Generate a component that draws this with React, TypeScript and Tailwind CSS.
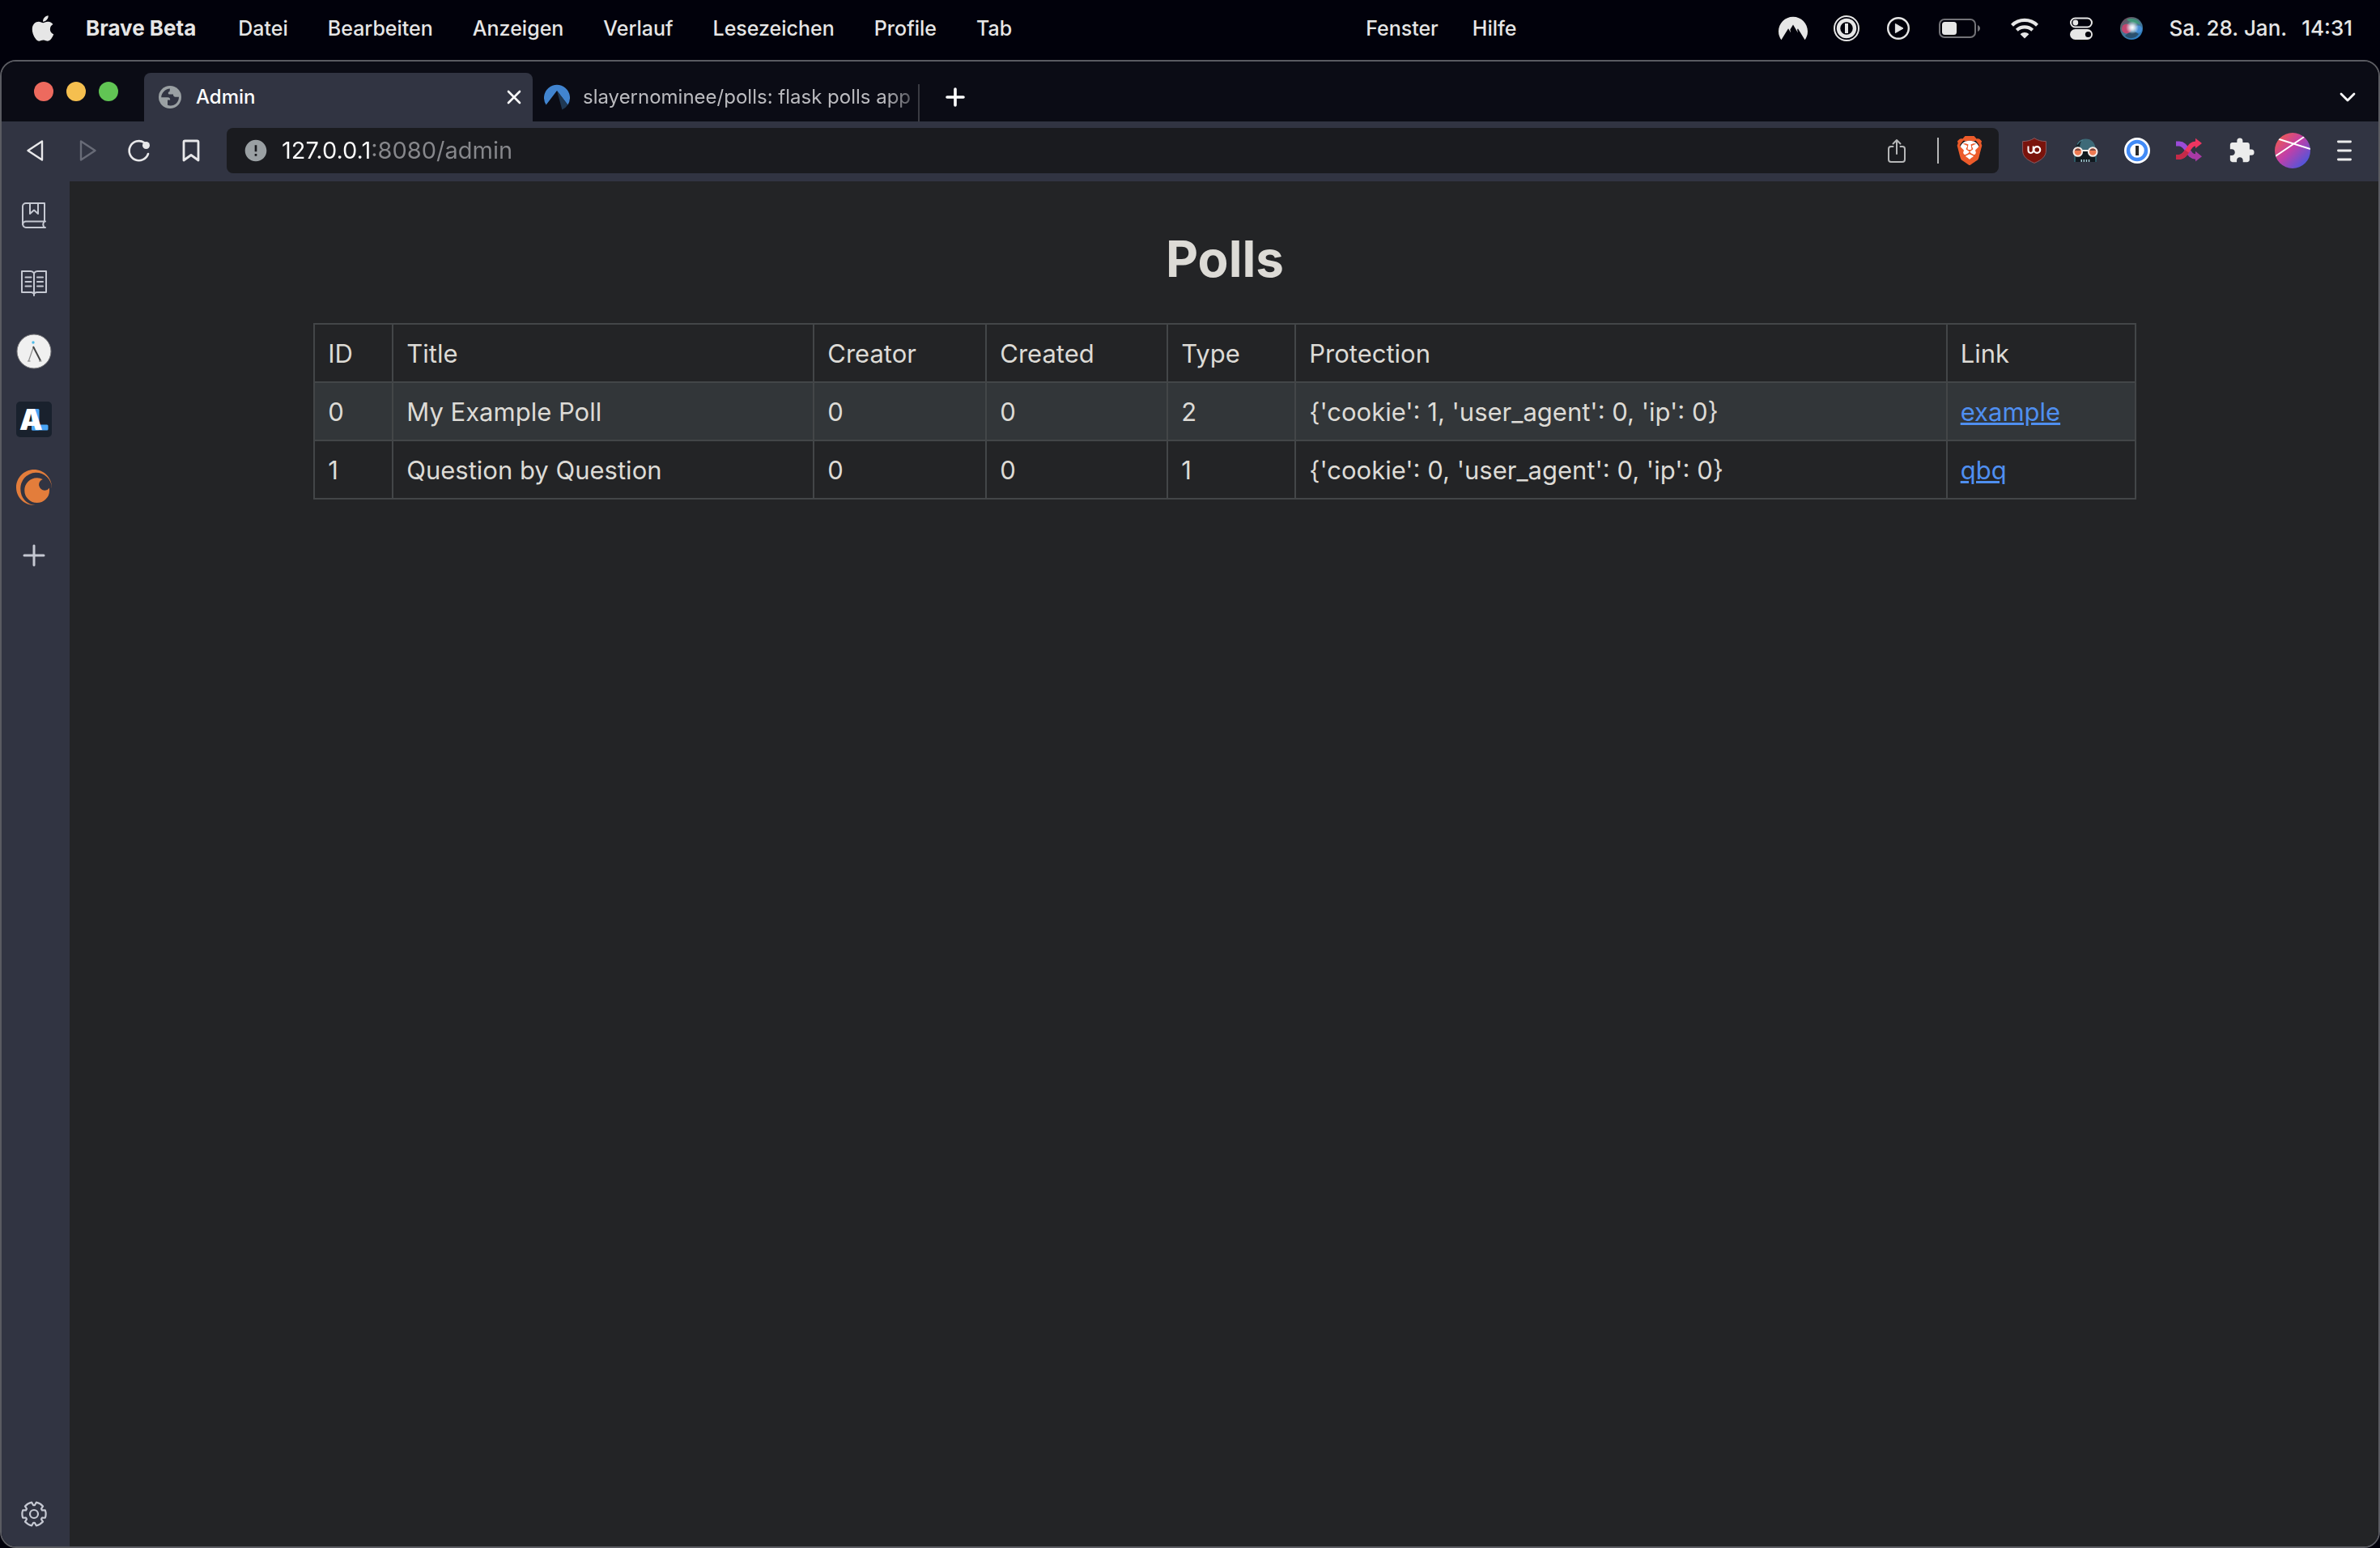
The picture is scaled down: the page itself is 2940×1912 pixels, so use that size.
import React from "react";
import { FaApple } from "react-icons/fa";
import { MdError, MdExtension } from "react-icons/md";
import { SiBrave, SiCrunchyroll, SiNordvpn } from "react-icons/si";

const menus = ["Datei", "Bearbeiten", "Anzeigen", "Verlauf", "Lesezeichen", "Profile", "Tab"];

const polls = [
  { id: 0, title: "My Example Poll", creator: 0, created: 0, type: 2, protection: "{'cookie': 1, 'user_agent': 0, 'ip': 0}", link: "example" },
  { id: 1, title: "Question by Question", creator: 0, created: 0, type: 1, protection: "{'cookie': 0, 'user_agent': 0, 'ip': 0}", link: "qbq" },
];

const polar = (r: number, deg: number) => {
  const a = (deg * Math.PI) / 180;
  return `${(16 + r * Math.cos(a)).toFixed(2)} ${(16 + r * Math.sin(a)).toFixed(2)}`;
};
const gearPath =
  [0, 60, 120, 180, 240, 300]
    .map((t, i) => `${i ? "L" : "M"}${polar(11, t - 25)}L${polar(14.6, t - 19)}A14.6 14.6 0 0 1 ${polar(14.6, t + 19)}L${polar(11, t + 25)}`)
    .join("") + "Z";

function PasswordIcon() {
  return (
    <svg className="size-8" viewBox="0 0 32 32" fill="none" stroke="#e6e6e6">
      <circle cx="16" cy="16" r="15" strokeWidth="2" />
      <circle cx="16" cy="16" r="10" strokeWidth="4.500" />
      <path d="M16 10v12" strokeWidth="4" />
    </svg>
  );
}

function PlayIcon() {
  return (
    <svg className="size-7" viewBox="0 0 28 28">
      <circle cx="14" cy="14" r="12.800" fill="none" stroke="#e6e6e6" strokeWidth="2.400" />
      <path d="M10.400 8.400v11.200l9.600-5.600z" fill="#e6e6e6" stroke="#e6e6e6" strokeLinejoin="round" />
    </svg>
  );
}

function BatteryIcon() {
  return (
    <svg className="h-6 w-[51px]" viewBox="0 0 51 24">
      <rect x="1" y="1" width="44" height="22" rx="6" fill="none" stroke="#737378" strokeWidth="2" />
      <path d="M48 8c4 1.500 4 6.500 0 8z" fill="#737378" />
      <rect x="4" y="4" width="18" height="16" rx="3.500" fill="#e6e6e6" />
    </svg>
  );
}

function WifiIcon() {
  return (
    <svg className="h-[26px] w-[34px]" viewBox="0 0 34 26" fill="none" stroke="#e6e6e6" strokeWidth="4.200">
      <path d="M1.500 9.200C10 .800 24 .800 32.500 9.200" />
      <path d="M7.300 15.200c5.500-5.200 13.900-5.200 19.400 0" />
      <path d="M17 25.500l-5.400-5.300c3-2.800 7.800-2.800 10.800 0z" fill="#e6e6e6" stroke="none" />
    </svg>
  );
}

function ControlCenterIcon() {
  return (
    <svg className="h-7 w-7" viewBox="0 0 28 28">
      <rect x="1" y="1.500" width="26" height="11" rx="5.500" fill="none" stroke="#e6e6e6" strokeWidth="2" />
      <circle cx="6.800" cy="7" r="3.400" fill="#e6e6e6" />
      <rect x="0" y="15" width="28" height="13" rx="6.500" fill="#e6e6e6" />
      <circle cx="22.500" cy="21.500" r="3.600" fill="#01010b" />
    </svg>
  );
}

function SiriIcon() {
  return (
    <svg className="size-7" viewBox="0 0 28 28">
      <defs>
        <linearGradient id="siri-base" x1="0" y1="0" x2="0.600" y2="1">
          <stop offset="0" stopColor="#7c3a52" />
          <stop offset="0.400" stopColor="#4f6e78" />
          <stop offset="1" stopColor="#2d7fc4" />
        </linearGradient>
        <radialGradient id="siri-glow">
          <stop offset="0" stopColor="#fff" />
          <stop offset="0.350" stopColor="#e9f2f8" stopOpacity="0.850" />
          <stop offset="1" stopColor="#e9f2f8" stopOpacity="0" />
        </radialGradient>
      </defs>
      <circle cx="14" cy="14" r="14" fill="url(#siri-base)" />
      <path d="M8 3a13 13 0 0 1 17 6c-5-1-12-1-17-6z" fill="#3d9c7a" opacity="0.850" />
      <circle cx="8" cy="14.500" r="6" fill="#d0436f" opacity="0.900" />
      <circle cx="22.500" cy="15" r="4.500" fill="#4691dd" opacity="0.850" />
      <path d="M6 23c5-5 11-6 17-2-4 6-12 7-17 2z" fill="#28465e" opacity="0.800" />
      <circle cx="15" cy="13" r="8" fill="url(#siri-glow)" />
    </svg>
  );
}

function GlobeIcon() {
  return (
    <svg className="size-7" viewBox="0 0 28 28">
      <circle cx="14" cy="14" r="14" fill="#9aa0a3" />
      <path
        d="M14 3.500C8 4 3.500 8.500 3.200 14.200H11c2.500 0 3.200 1.200 3.200 3.300H11v6.300c1 .500 2.300.800 3.600.800C20.500 24.500 25 20 25 13.800h-3.500c-3 0-3.500-1.500-3.500-3.300h-4.500c-2.300 0-2.300-3.200 0-3.600z"
        fill="#313442"
      />
    </svg>
  );
}

function CodebergIcon() {
  return (
    <svg className="h-8 w-8" viewBox="0 0 32 32">
      <path d="M2.600 25.500A16 16 0 1 1 29.400 25.500L16 8z" fill="#4184cf" />
      <path d="M16 8l13.400 17.500a16 16 0 0 1-7 6z" fill="#1f3853" />
    </svg>
  );
}

function ShareIcon() {
  return (
    <svg className="h-[30px] w-6" viewBox="0 0 24 30" fill="none" stroke="#b6b7b8" strokeWidth="2" strokeLinecap="round" strokeLinejoin="round">
      <path d="M7.500 10H5a3 3 0 0 0-3 3v13a3 3 0 0 0 3 3h14a3 3 0 0 0 3-3V13a3 3 0 0 0-3-3h-2.500" />
      <path d="M12 19V2M7.500 6.500L12 2l4.500 4.500" />
    </svg>
  );
}

function UblockIcon() {
  return (
    <svg className="h-8 w-[30px]" viewBox="0 0 30 32" fill="none">
      <path d="M15 .600c4.500 3 9 4 14.400 4V16c0 7-5 11.500-14.400 15.400C5.600 27.500.600 23 .600 16V4.600c5.400 0 9.900-1 14.400-4z" fill="#7a130c" stroke="#8b5a60" />
      <path d="M7.500 10.500v5.300a3.100 3.100 0 0 0 6.200 0v-5.300" stroke="#fff" strokeWidth="2" />
      <circle cx="18.300" cy="15" r="3.900" stroke="#fff" strokeWidth="2.200" />
    </svg>
  );
}

function GogglesIcon() {
  return (
    <svg className="size-8" viewBox="0 0 32 32">
      <path d="M3 15v15h26V15z" fill="#11191f" />
      <path d="M3 30V18M29 30V18" stroke="#2f6877" strokeWidth="1.500" />
      <path d="M3.500 16C4 6 9.500 1.500 16.500 1.500S28.500 6 29 16z" fill="#3d6a78" />
      <path d="M3.500 16C4 8 7 3.500 13 2c-3 3-4 6-4 14z" fill="#16232b" />
      <path d="M6 8.500C8 5 10 3.500 13 2.800" fill="none" stroke="#4d8190" strokeWidth="1.200" />
      <path d="M10.500 28.500h11" stroke="#a8cdd8" strokeWidth="3" strokeDasharray="1.500 1.600" />
      <circle cx="6.800" cy="17.500" r="5.300" fill="#ee7a52" stroke="#f5ece8" strokeWidth="2" />
      <circle cx="25.200" cy="17.500" r="5.300" fill="#ee7a52" stroke="#f5ece8" strokeWidth="2" />
      <path d="M2.800 16a4.500 4.500 0 0 1 8 0zM21.200 16a4.500 4.500 0 0 1 8 0z" fill="#7b473e" />
      <path d="M12.100 16h7.800" stroke="#f5ece8" strokeWidth="2" />
    </svg>
  );
}

function PasswordExtensionIcon() {
  return (
    <svg className="size-8" viewBox="0 0 32 32">
      <circle cx="16" cy="16" r="16" fill="#fff" />
      <circle cx="16" cy="16" r="11" fill="#fff" stroke="#428bf7" strokeWidth="4.500" />
      <path d="M16 10v12" stroke="#2b2b2b" strokeWidth="4" />
    </svg>
  );
}

function ShuffleIcon() {
  return (
    <svg className="size-8" viewBox="0 0 32 32">
      <path d="M0 7.500h4c5 0 7.500 4 10.500 8.500s5 7.500 10 7.500" fill="none" stroke="#9b4bd8" strokeWidth="6" />
      <path d="M14 15.500c3 4.500 5.500 8 11 8" fill="none" stroke="#a83aa5" strokeWidth="6" />
      <path d="M24 16.800L32 23.300l-8 6.200z" fill="#a83aa5" />
      <path d="M0 24h4c5 0 7.500-4 10.500-8.500s5-8 10-8" fill="none" stroke="#ee3560" strokeWidth="6" />
      <path d="M0 24h4c4.500 0 7-3.500 9.500-7" fill="none" stroke="#c42a48" strokeWidth="6" />
      <path d="M24 .800L32 7l-8 6.200z" fill="#ee3560" />
    </svg>
  );
}

function AvatarIcon() {
  return (
    <svg className="size-11" viewBox="0 0 44 44">
      <defs>
        <linearGradient id="avatar-fill" x1="0.100" y1="0.100" x2="0.900" y2="0.900">
          <stop offset="0" stopColor="#ee5a52" />
          <stop offset="0.450" stopColor="#c13fa8" />
          <stop offset="1" stopColor="#4458e0" />
        </linearGradient>
        <clipPath id="avatar-clip">
          <circle cx="22" cy="22" r="22" />
        </clipPath>
      </defs>
      <circle cx="22" cy="22" r="22" fill="url(#avatar-fill)" />
      <path d="M4 7.500L44 20M0 29.500L37 4.500" stroke="#fff" strokeWidth="2" clipPath="url(#avatar-clip)" />
    </svg>
  );
}

function BookmarksIcon() {
  return (
    <svg className="size-8" viewBox="0 0 32 32" fill="none" stroke="#c5c8d2" strokeWidth="2" strokeLinecap="round" strokeLinejoin="round">
      <path d="M2 27V5a4 4 0 0 1 4-4h23v22" />
      <path d="M30 23.500H6a3.700 3.700 0 0 0 0 7.500h24M28.500 24c-1.500 2-1.500 4.500 0 6.500" />
      <path d="M11 1.500V14l5-4.500 5 4.500V1.500" />
    </svg>
  );
}

function ReadingListIcon() {
  return (
    <svg className="size-8" viewBox="0 0 32 32" fill="none" stroke="#c5c8d2" strokeWidth="2" strokeLinecap="round" strokeLinejoin="round">
      <path d="M16 3.500C15 1.800 14 1 12 1H1v26h11.500c1.700 0 2.700.700 3.500 2 .800-1.300 1.800-2 3.500-2H31V1H20c-2 0-3 .800-4 2.500zM16 3.500V31" />
      <path d="M5.500 8.500h7M5.500 14h7M5.500 19.500h7M20 8.500h7M20 14h7M20 19.500h7" />
    </svg>
  );
}

function CompassIcon() {
  return (
    <svg className="size-11" viewBox="0 0 44 44" fill="none">
      <circle cx="22" cy="22" r="21" fill="#f0f0f0" stroke="#77777a" />
      <circle cx="21" cy="11" r="1.700" fill="#4dbbe8" />
      <path d="M21.500 16L15.500 33.500" stroke="#8a8a8a" strokeWidth="1.200" />
      <path d="M21 16l9 17.500" stroke="#444" strokeWidth="2" />
      <path d="M14 34h3.500M28 34h3.500" stroke="#777" />
    </svg>
  );
}

function AniListIcon() {
  return (
    <svg className="size-11" viewBox="0 0 44 44" fontFamily="Inter, sans-serif" fontWeight="900">
      <rect width="44" height="44" rx="5" fill="#19212d" />
      <rect x="19" y="9" width="9.500" height="26.500" rx="1.500" fill="#4aa5f5" />
      <rect x="19" y="28.500" width="20.500" height="7" rx="1.500" fill="#4aa5f5" />
      <text x="4" y="35" fontSize="36" fill="#fff">A</text>
    </svg>
  );
}

function MacMenuBar() {
  return (
    <header className="flex h-[74px] shrink-0 items-center bg-[#01010b] pr-[34px] pb-1 pl-9 text-[26px] leading-8 font-medium text-[#e6e6e6]">
      <nav aria-label="Menüleiste" className="flex items-center">
        <button aria-label="Apple" className="mr-9 flex w-[34px] justify-center">
          <FaApple className="size-9" />
        </button>
        <button className="font-bold">Brave Beta</button>
        <span className="ml-[52px] flex gap-[49px] text-[25px]">
          {menus.map((m) => (
            <button key={m}>{m}</button>
          ))}
        </span>
      </nav>
      <nav aria-label="Weitere Menüs" className="ml-[437px] flex gap-[42px] text-[25px]">
        <button>Fenster</button>
        <button>Hilfe</button>
      </nav>
      <div className="ml-auto flex items-center">
        <button aria-label="NordVPN" className="mr-8"><SiNordvpn className="size-9" /></button>
        <button aria-label="1Password" className="mr-[34px]"><PasswordIcon /></button>
        <button aria-label="Wiedergabe" className="mr-9"><PlayIcon /></button>
        <button aria-label="Batterie" className="mr-[38px]"><BatteryIcon /></button>
        <button aria-label="WLAN" className="mr-[39px]"><WifiIcon /></button>
        <button aria-label="Kontrollzentrum" className="mr-[34px]"><ControlCenterIcon /></button>
        <button aria-label="Siri" className="mr-8"><SiriIcon /></button>
        <button className="flex gap-[18px]"><span>Sa. 28. Jan.</span><span>14:31</span></button>
      </div>
    </header>
  );
}

function TabStrip() {
  return (
    <div className="flex h-[74px] shrink-0 items-end bg-[#0b0c15] pl-10 text-2xl leading-8">
      <div className="mb-[25px] flex gap-4">
        <button aria-label="Schließen" className="size-6 rounded-full bg-[#ed6a5e]" />
        <button aria-label="Minimieren" className="size-6 rounded-full bg-[#f5bf4f]" />
        <button aria-label="Maximieren" className="size-6 rounded-full bg-[#61c554]" />
      </div>
      <div role="tablist" className="ml-8 flex h-[60px]">
        <div className="flex w-[480px] items-center rounded-t-lg bg-[#313442] pr-[10px] pl-[18px]">
          <button role="tab" aria-selected="true" className="flex grow items-center gap-[18px] font-medium text-white">
            <GlobeIcon />
            Admin
          </button>
          <button aria-label="Tab schließen" className="p-1">
            <svg className="size-[18px]" viewBox="0 0 18 18" stroke="#fff" strokeWidth="2.600" strokeLinecap="round"><path d="M2 2l14 14M16 2L2 16" /></svg>
          </button>
        </div>
        <div className="flex w-[476px] items-center pl-[14px]">
          <button role="tab" aria-selected="false" className="flex w-full items-center gap-4 text-[#bbbbbf]">
            <CodebergIcon />
            <span className="grow text-left whitespace-nowrap [mask-image:linear-gradient(90deg,#000_90%,transparent_104%)]">slayernominee/polls: flask polls app</span>
          </button>
        </div>
      </div>
      <div className="h-[46px] w-0.5 bg-[#3a3b42]" aria-hidden="true" />
      <button aria-label="Neuer Tab" className="mb-[18px] ml-8">
        <svg className="size-6" viewBox="0 0 24 24" stroke="#fff" strokeWidth="3.600" strokeLinecap="round"><path d="M12 2v20M2 12h20" /></svg>
      </button>
      <button aria-label="Tabs durchsuchen" className="mr-7 mb-[23px] ml-auto">
        <svg className="h-3.5 w-5" viewBox="0 0 20 14" fill="none" stroke="#fff" strokeWidth="2.800" strokeLinecap="round" strokeLinejoin="round"><path d="M2 3l8 8 8-8" /></svg>
      </button>
    </div>
  );
}

function Toolbar() {
  return (
    <div className="flex h-[74px] shrink-0 items-center bg-[#313442] pr-8 pb-0.5 pl-[30px]">
      <div className="flex shrink-0 items-center text-[#e8e8ea]">
        <button aria-label="Zurück" className="w-6">
          <svg className="h-7 w-6" viewBox="0 0 24 28" fill="none" stroke="currentColor" strokeWidth="2.400" strokeLinejoin="round"><path d="M20 2.500v23L2.500 14z" /></svg>
        </button>
        <button aria-label="Vorwärts" className="ml-10 w-6 text-[#686b77]">
          <svg className="h-7 w-6" viewBox="0 0 24 28" fill="none" stroke="currentColor" strokeWidth="2.400" strokeLinejoin="round"><path d="M4 2.500v23L21.500 14z" /></svg>
        </button>
        <button aria-label="Neu laden" className="ml-9 w-8">
          <svg className="h-8 w-8" viewBox="0 0 32 32" fill="none" stroke="currentColor" strokeWidth="2.600" strokeLinecap="round"><path d="M27 20A12 12 0 1 1 22 6" /><circle cx="24.500" cy="9.500" r="4.500" fill="currentColor" stroke="none" /></svg>
        </button>
        <button aria-label="Lesezeichen" className="ml-9 w-6">
          <svg className="h-7 w-6" viewBox="0 0 24 28" fill="none" stroke="currentColor" strokeWidth="2.800" strokeLinejoin="round"><path d="M3 3.500Q3 2 4.500 2h15Q21 2 21 3.500V26l-9-6.500L3 26z" /></svg>
        </button>
      </div>
      <div className="ml-8 flex h-14 grow items-center rounded-lg bg-[#1a1b1f] pr-[18px] pl-5">
        <MdError className="size-8 shrink-0 text-[#9aa0a3]" />
        <input
          aria-label="Adresse"
          defaultValue="127.0.0.1:8080/admin"
          className="ml-4 min-w-0 grow bg-[linear-gradient(90deg,#ffffff_110px,#87888c_110px)] bg-clip-text text-[29px] leading-9 text-transparent outline-none"
        />
        <button aria-label="Teilen"><ShareIcon /></button>
        <span className="mr-5 ml-[38px] h-8 w-0.5 bg-[#b6b7b8]" aria-hidden="true" />
        <button aria-label="Brave Shields" className="flex size-9 items-center justify-center bg-[radial-gradient(circle,#fff_12px,transparent_13px)]">
          <SiBrave className="size-9 text-[#ec5b2a]" />
        </button>
      </div>
      <div className="flex shrink-0 items-center">
        <button aria-label="uBlock Origin" className="ml-[29px]"><UblockIcon /></button>
        <button aria-label="Goggles" className="ml-8"><GogglesIcon /></button>
        <button aria-label="1Password" className="ml-8"><PasswordExtensionIcon /></button>
        <button aria-label="Shuffle" className="ml-8"><ShuffleIcon /></button>
        <button aria-label="Erweiterungen" className="ml-8"><MdExtension className="size-[34px] text-[#ececec]" /></button>
        <button aria-label="Profil" className="ml-6"><AvatarIcon /></button>
        <button aria-label="Menü" className="ml-8">
          <svg className="h-7 w-5" viewBox="0 0 20 28" stroke="#ececec" strokeWidth="2.800" strokeLinecap="round"><path d="M2.400 3h15.200M2.400 14h15.200M2.400 25h15.200" /></svg>
        </button>
      </div>
    </div>
  );
}

function Sidebar() {
  return (
    <aside className="flex w-[84px] shrink-0 flex-col items-center justify-between bg-[#313442] pt-5 pr-1 pb-[18px]">
      <div className="flex flex-col items-center gap-10">
        <button aria-label="Lesezeichen" className="flex size-11 items-center justify-center"><BookmarksIcon /></button>
        <button aria-label="Leseliste" className="flex size-11 items-center justify-center"><ReadingListIcon /></button>
        <button aria-label="Kompass"><CompassIcon /></button>
        <button aria-label="AniList"><AniListIcon /></button>
        <button aria-label="Crunchyroll"><SiCrunchyroll className="size-11 text-[#e37d3b]" /></button>
        <button aria-label="Hinzufügen" className="flex size-11 items-center justify-center">
          <svg className="size-7" viewBox="0 0 28 28" stroke="#c5c8d2" strokeWidth="3" strokeLinecap="round"><path d="M14 2v24M2 14h24" /></svg>
        </button>
      </div>
      <button aria-label="Einstellungen" className="flex size-11 items-center justify-center">
        <svg className="size-8" viewBox="0 0 32 32" fill="none" stroke="#c5c8d2" strokeWidth="2.200" strokeLinejoin="round">
          <path d={gearPath} />
          <circle cx="16" cy="16" r="5" />
        </svg>
      </button>
    </aside>
  );
}

const cell = "h-[72px] border-2 border-[#434648] px-4 pt-0.5 text-left font-normal";

function PollsPage() {
  return (
    <main className="flex min-w-0 grow flex-col items-center bg-[#232426] pl-0.5 text-[#dddbd6]">
      <h1 className="mt-14 text-[62px] leading-[80px] font-bold">Polls</h1>
      <table className="mt-[39px] w-[79%] table-fixed border-collapse text-[31px] leading-10">
        <colgroup>
          <col className="w-[97px]" />
          <col className="w-[520px]" />
          <col className="w-[213px]" />
          <col className="w-[224px]" />
          <col className="w-[158px]" />
          <col />
          <col className="w-[233px]" />
        </colgroup>
        <thead>
          <tr>
            {["ID", "Title", "Creator", "Created", "Type", "Protection", "Link"].map((h) => (
              <th key={h} scope="col" className={cell}>{h}</th>
            ))}
          </tr>
        </thead>
        <tbody>
          {polls.map((p) => (
            <tr key={p.id} className="odd:bg-[#323639]">
              <td className={cell}>{p.id}</td>
              <td className={cell}>{p.title}</td>
              <td className={cell}>{p.creator}</td>
              <td className={cell}>{p.created}</td>
              <td className={cell}>{p.type}</td>
              <td className={cell}>{p.protection}</td>
              <td className={cell}>
                <a href={`#${p.link}`} className="text-[#4f8ff0] underline">{p.link}</a>
              </td>
            </tr>
          ))}
        </tbody>
      </table>
    </main>
  );
}

export default function App() {
  return (
    <div className="flex h-screen flex-col bg-[#01010b] font-[Inter,'Liberation_Sans',sans-serif]">
      <MacMenuBar />
      <div className="flex min-h-0 grow flex-col overflow-hidden rounded-[20px] border-2 border-[#5a5b61]">
        <TabStrip />
        <Toolbar />
        <div className="flex min-h-0 grow">
          <Sidebar />
          <PollsPage />
        </div>
      </div>
    </div>
  );
}
